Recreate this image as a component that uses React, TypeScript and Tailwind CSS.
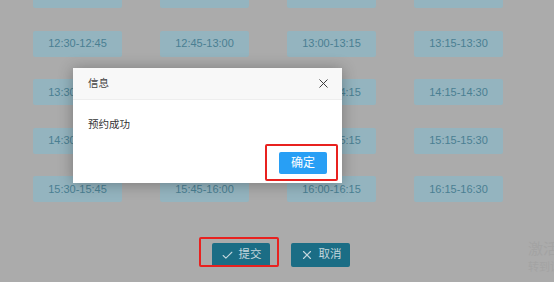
import { Check, X } from 'lucide-react';

const slots = [
  '11:30-11:45', '11:45-12:00', '12:00-12:15', '12:15-12:30',
  '12:30-12:45', '12:45-13:00', '13:00-13:15', '13:15-13:30',
  '13:30-13:45', '13:45-14:00', '14:00-14:15', '14:15-14:30',
  '14:30-14:45', '14:45-15:00', '15:00-15:15', '15:15-15:30',
  '15:30-15:45', '15:45-16:00', '16:00-16:15', '16:15-16:30',
];

const App = () => {
  return (
    <div className="relative h-[282px] w-[554px] overflow-hidden bg-[#ababab] font-['Liberation_Sans','Noto_Sans_CJK_SC',sans-serif]">
      <div className="-mt-[18px] flex flex-col pl-[33px]">
        <div className="grid grid-cols-[89px_89px_89px_89px] gap-x-[38px] gap-y-[22.5px]">
          {slots.map((slot) => (
            <div
              key={slot}
              className="flex h-[26px] items-center justify-center rounded-[2px] bg-[#94b4bf] text-[11px] text-[#4a7f92]"
            >
              {slot}
            </div>
          ))}
        </div>
        <div className="mt-[41px] flex gap-[21px] pl-[179px]">
          <button className="flex h-[24px] w-[58px] items-center justify-center gap-[5px] rounded-[2px] bg-[#1b6d85] text-[11.5px] text-[#c3d6dc]">
            <Check size={13} strokeWidth={2} />
            提交
          </button>
          <button className="flex h-[24px] w-[59px] items-center justify-center gap-[5px] rounded-[2px] bg-[#1b6d85] text-[11.5px] text-[#c3d6dc]">
            <X size={14} strokeWidth={2} />
            取消
          </button>
        </div>
      </div>

      <div className="absolute left-[528px] top-[240px] flex flex-col gap-[2px] whitespace-nowrap text-[#a3a3a3]">
        <span className="text-[15px] leading-[18px]">激活 Windows</span>
        <span className="text-[11px] leading-[14px]">转到设置以激活 Windows。</span>
      </div>

      <div className="absolute left-[73px] top-[68px] flex h-[115px] w-[269px] flex-col bg-white shadow-[0_1px_14px_rgba(0,0,0,0.3)]">
        <div className="flex h-[32px] items-center justify-between border-b border-[#eeeeee] bg-[#f8f8f8] pl-[15px] pr-[11px] text-[10.5px] text-[#444]">
          <span>信息</span>
          <X size={15} strokeWidth={1.5} className="text-[#333]" />
        </div>
        <div className="pl-[15px] pt-[17px] text-[10.5px] text-[#333]">预约成功</div>
        <div className="mt-auto flex justify-end pb-[9px] pr-[15px]">
          <button className="flex h-[22px] w-[48px] items-center justify-center rounded-[2px] bg-[#289ff5] text-[12px] text-white">
            确定
          </button>
        </div>
      </div>

      <div className="pointer-events-none absolute left-[265px] top-[144px] h-[37px] w-[73px] rounded-[2px] border-2 border-[#e8211f]" />
      <div className="pointer-events-none absolute left-[199px] top-[237px] h-[30px] w-[80px] rounded-[2px] border-2 border-[#e8211f]" />
    </div>
  );
};

export default App;
